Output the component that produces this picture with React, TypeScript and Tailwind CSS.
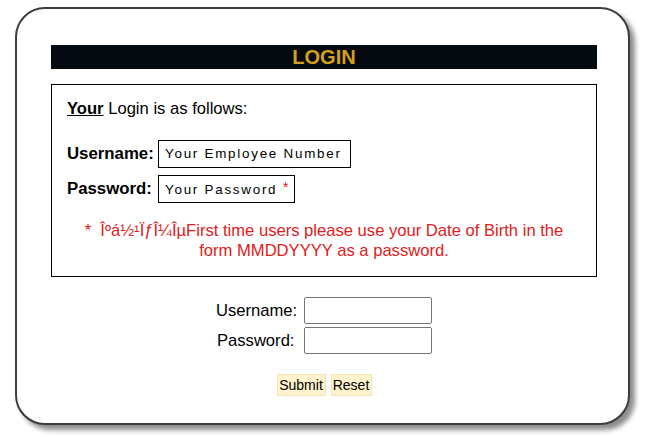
const App = () => {
  return (
    <div className="min-h-[437px] bg-white pl-[15px] pt-[7px] font-['Liberation_Sans',Arial,sans-serif] text-black">
      <div className="w-[615px] h-[418px] rounded-[30px] border-2 border-[#3c3c3c] bg-white shadow-[5px_5px_5px_rgba(0,0,0,0.45)] pt-[36px] pl-[34px]">
        <div className="w-[546px]">
          <div className="h-[24px] bg-[#040a10] text-center text-[20px] font-bold leading-[24px] text-[#d4a020]">
            LOGIN
          </div>

          <div className="mt-[15px] h-[193px] border border-black px-[15px] pt-[14px]">
            <p className="text-[16.6px] leading-[20px]">
              <span className="font-bold underline">Your</span> Login is as follows:
            </p>

            <div className="mt-[21px] grid grid-cols-[91px_auto] items-center justify-start gap-y-[7px]">
              <span className="text-[16.8px] font-bold">Username:</span>
              <div className="h-[28px] w-[193px] border border-black pl-[6px] text-[13.4px] leading-[26px] tracking-[1.75px]">
                Your Employee Number
              </div>
              <span className="text-[16.8px] font-bold">Password:</span>
              <div className="h-[28px] w-[137px] border border-black pl-[6px] text-[13.4px] leading-[26px] tracking-[1.75px]">
                Your Password <span className="relative -top-[2px] text-[15px] text-[#e02020]">*</span>
              </div>
            </div>

            <p className="mt-[18px] text-center text-[16.6px] leading-[20px] text-[#e02020]">
              *&nbsp; Îºá½¹ÏƒÎ¼ÎµFirst time users please use your Date of Birth in the
              <br />
              form MMDDYYYY as a password.
            </p>
          </div>

          <div className="mt-[20px] flex justify-center">
            <div className="grid grid-cols-[88px_128px] gap-y-[3px] text-[16.6px]">
              <label className="leading-[27px]">Username:</label>
              <input type="text" className="h-[27px] w-[128px] rounded-[2px] border border-[#767676]" />
              <label className="pl-[1px] leading-[27px]">Password:</label>
              <input type="password" className="h-[27px] w-[128px] rounded-[2px] border border-[#767676]" />
            </div>
          </div>

          <div className="mt-[20px] flex justify-center gap-[5px] text-[14px]">
            <button className="h-[22px] w-[49px] border border-[#f3e4b8] bg-[#fff2cc]">Submit</button>
            <button className="h-[22px] w-[41px] border border-[#f3e4b8] bg-[#fff2cc]">Reset</button>
          </div>
        </div>
      </div>
    </div>
  );
};

export default App;
